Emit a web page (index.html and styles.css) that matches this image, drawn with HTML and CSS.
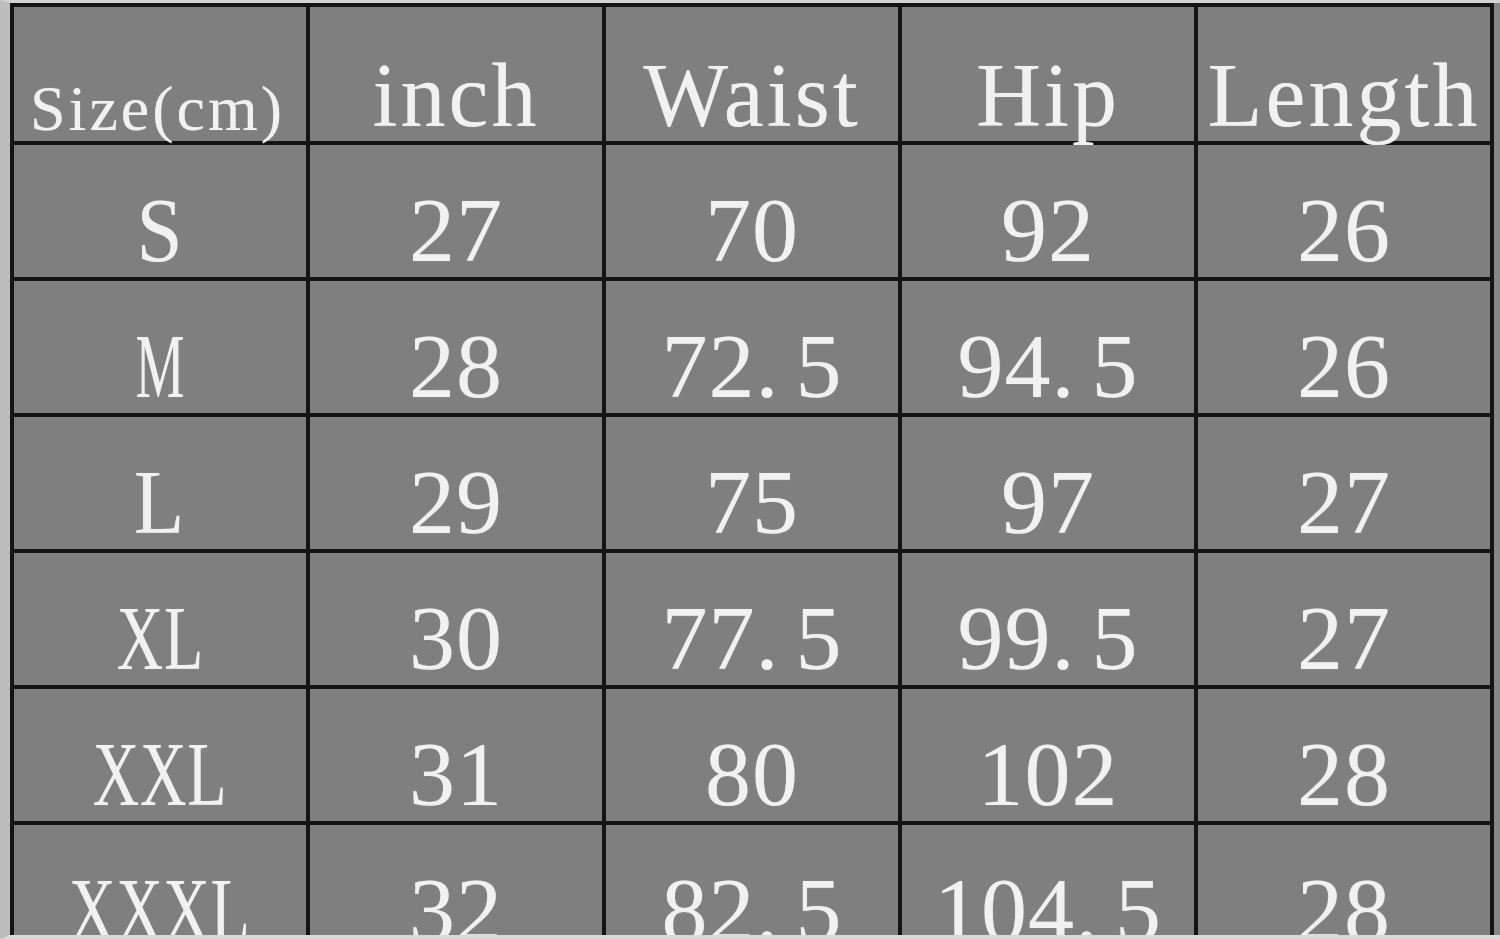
FILE: index.html
```html
<!DOCTYPE html>
<html lang="en">
<head>
<meta charset="utf-8">
<title>Size chart</title>
<link rel="stylesheet" href="styles.css">
</head>
<body>
<div class="page">
  <div class="chart">
    <div class="cell head small">Size(cm)</div>
    <div class="cell head">inch</div>
    <div class="cell head">Waist</div>
    <div class="cell head">Hip</div>
    <div class="cell head">Length</div>

    <div class="cell"><span class="size">S</span></div>
    <div class="cell">27</div>
    <div class="cell">70</div>
    <div class="cell">92</div>
    <div class="cell">26</div>

    <div class="cell"><span class="size size-m">M</span></div>
    <div class="cell">28</div>
    <div class="cell">72<span class="dot">.</span>5</div>
    <div class="cell">94<span class="dot">.</span>5</div>
    <div class="cell">26</div>

    <div class="cell"><span class="size">L</span></div>
    <div class="cell">29</div>
    <div class="cell">75</div>
    <div class="cell">97</div>
    <div class="cell">27</div>

    <div class="cell"><span class="size size-x">XL</span></div>
    <div class="cell">30</div>
    <div class="cell">77<span class="dot">.</span>5</div>
    <div class="cell">99<span class="dot">.</span>5</div>
    <div class="cell">27</div>

    <div class="cell"><span class="size size-x">XXL</span></div>
    <div class="cell">31</div>
    <div class="cell">80</div>
    <div class="cell">102</div>
    <div class="cell">28</div>

    <div class="cell"><span class="size size-x">XXXL</span></div>
    <div class="cell">32</div>
    <div class="cell">82<span class="dot">.</span>5</div>
    <div class="cell">104<span class="dot">.</span>5</div>
    <div class="cell">28</div>
  </div>
</div>
</body>
</html>
```

FILE: styles.css
```css
html, body {
  margin: 0;
  padding: 0;
  height: 939px;
  overflow: hidden;
}

body {
  background: #868686;
  font-family: "Liberation Serif", "Times New Roman", serif;
}

.page {
  box-sizing: border-box;
  height: 939px;
  overflow: hidden;
  border-left: 10px solid #bcbcbc;
  border-top: 3px solid #d4d4d4;
  border-bottom: 4px solid #d8d8d8;
}

.chart {
  display: grid;
  grid-template-columns: repeat(5, 292px);
  grid-template-rows: 134px repeat(6, 132px);
  gap: 4px;
  padding: 4px;
  width: max-content;
  background: #141414;
}

.cell {
  display: flex;
  align-items: flex-end;
  justify-content: center;
  background: #7f7f7f;
  color: #f1f1f1;
  font-size: 92px;
  line-height: 1;
  padding-bottom: 1px;
  letter-spacing: 1px;
  text-shadow: 0 0 1px rgba(255, 255, 255, 0.35);
  white-space: nowrap;
}

.head {
  font-size: 90px;
  letter-spacing: 3px;
  padding-bottom: 0;
}

.head.small {
  font-size: 64px;
  letter-spacing: 3px;
  padding-bottom: 0;
  justify-content: flex-start;
  padding-left: 16px;
}

.size {
  display: inline-block;
  transform: scaleX(0.9);
}

.size-x {
  transform: scaleX(0.7);
}

.size-m {
  transform: scaleX(0.6);
}

.dot {
  margin-right: 16px;
}
```
